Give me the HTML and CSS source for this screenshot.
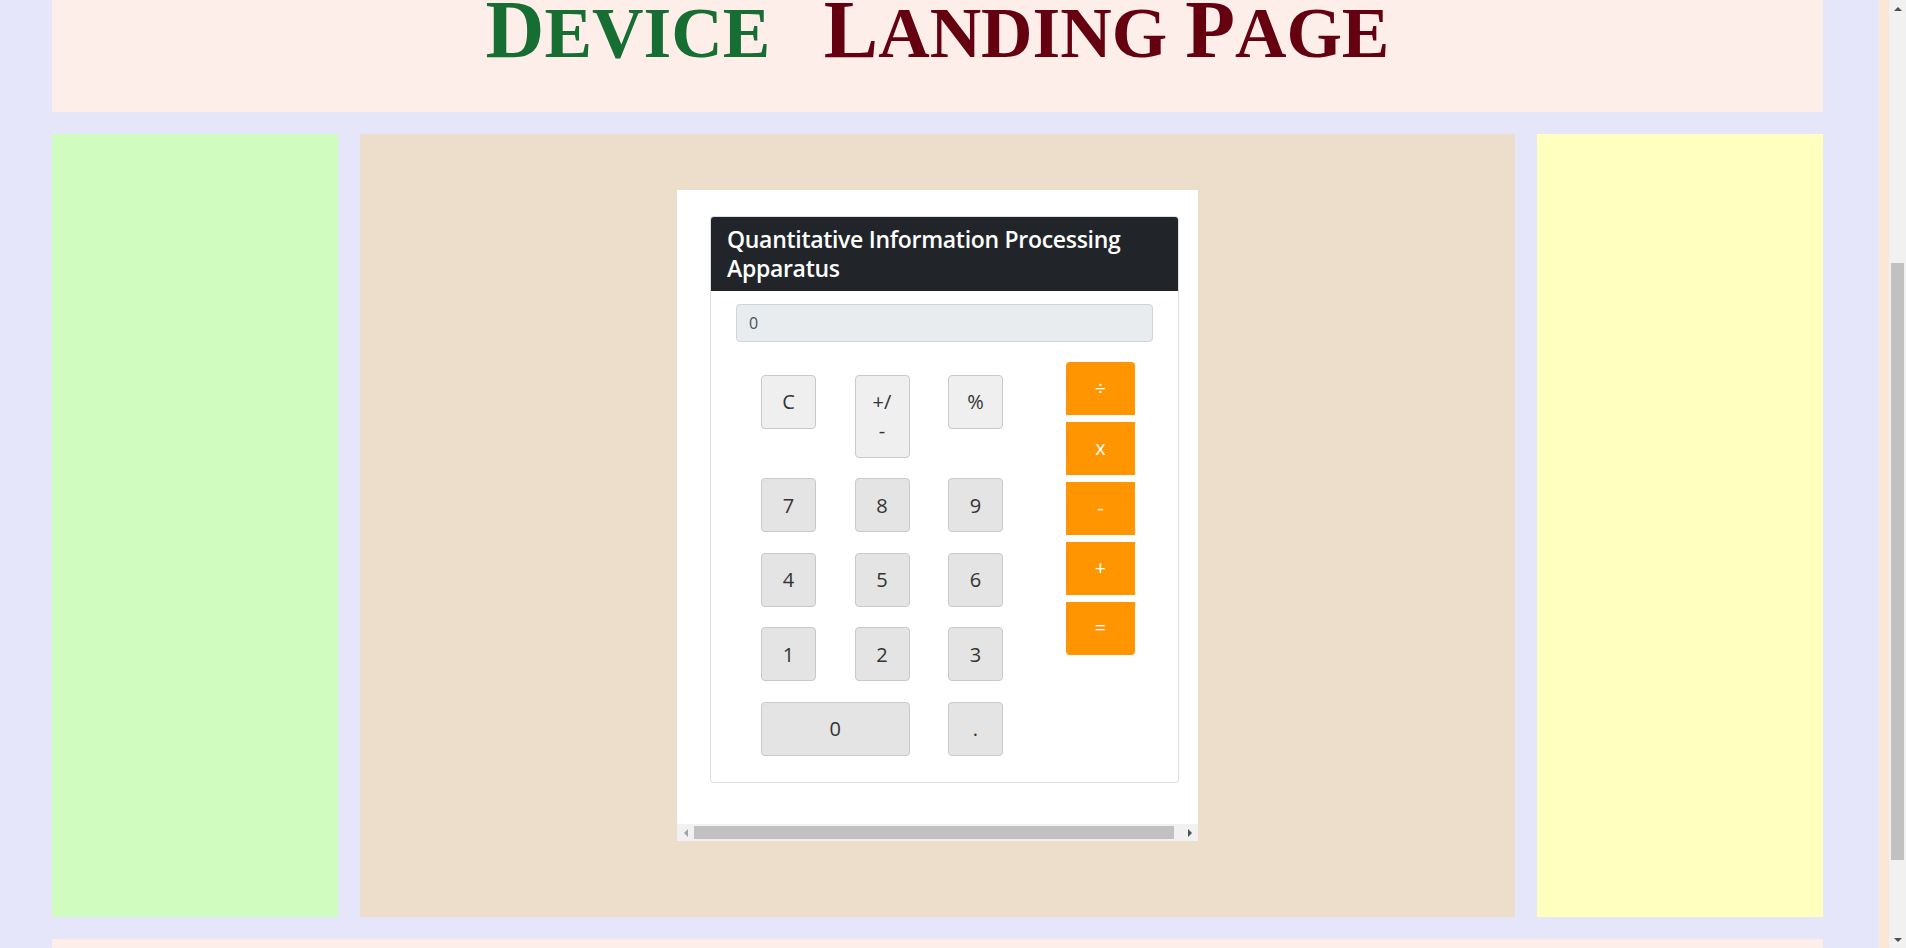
FILE: index.html
```html
<!DOCTYPE html>
<html lang="en">
<head>
<meta charset="utf-8">
<title>Device Landing Page</title>
<link rel="stylesheet" href="styles.css">
</head>
<body>
<div class="page">
  <header class="masthead">
    <h1 class="title"><span class="t-green"><span class="big">D</span>evice</span>&nbsp;&nbsp; <span class="t-red"><span class="big">L</span>anding <span class="big">P</span>age</span></h1>
  </header>
  <main class="columns">
    <aside class="side side-left"></aside>
    <section class="center">
      <div class="frame">
        <div class="frame-view">
          <div class="frame-inner">
            <div class="card">
              <div class="card-header">
                <h4 class="card-title">Quantitative Information Processing Apparatus</h4>
              </div>
              <div class="card-body">
                <div class="display">0</div>
                <div class="keypad">
                  <div class="numbers">
                    <button class="key key-fn">C</button>
                    <button class="key key-fn">+/<br>-</button>
                    <button class="key key-fn">%</button>
                    <button class="key">7</button>
                    <button class="key">8</button>
                    <button class="key">9</button>
                    <button class="key">4</button>
                    <button class="key">5</button>
                    <button class="key">6</button>
                    <button class="key">1</button>
                    <button class="key">2</button>
                    <button class="key">3</button>
                    <button class="key key-zero">0</button>
                    <button class="key">.</button>
                  </div>
                  <div class="ops">
                    <button class="op op-first">÷</button>
                    <button class="op">x</button>
                    <button class="op">-</button>
                    <button class="op">+</button>
                    <button class="op op-last">=</button>
                  </div>
                </div>
              </div>
            </div>
          </div>
        </div>
        <div class="hscroll">
          <div class="sb-btn"><span class="tri tri-left"></span></div>
          <div class="htrack"><div class="hthumb"></div></div>
          <div class="sb-btn"><span class="tri tri-right"></span></div>
        </div>
      </div>
    </section>
    <aside class="side side-right"></aside>
  </main>
  <footer class="footer"></footer>
</div>
<div class="vscroll">
  <div class="sb-btn sb-btn-v"><span class="tri tri-up"></span></div>
  <div class="vtrack"><div class="vthumb"></div></div>
  <div class="sb-btn sb-btn-v"><span class="tri tri-down"></span></div>
</div>
<script src="script.js"></script>
</body>
</html>
```
FILE: styles.css
```css
html {
  background: #fae7d4;
}
body {
  margin: 0 27px 0 0;
  font-family: "Open Sans", "Noto Sans", sans-serif;
}
.page {
  background: #e6e6fa;
  padding: 22px 56px 22px 52px;
  display: flex;
  flex-direction: column;
  gap: 22px;
}
.masthead {
  background: #fdeeea;
  height: 480px;
  box-sizing: border-box;
  display: flex;
  flex-direction: column;
  justify-content: flex-end;
  padding-bottom: 54px;
}
.title {
  margin: 0;
  font-family: "Liberation Serif", "Times New Roman", serif;
  font-weight: bold;
  font-size: 71.3px;
  line-height: 0.7;
  text-transform: uppercase;
  text-align: center;
  white-space: nowrap;
}
.big {
  font-size: 81.5px;
}
.t-green {
  color: #176e32;
}
.t-red {
  color: #650011;
}
.columns {
  display: grid;
  grid-template-columns: 286px 1fr 286px;
  gap: 22px;
}
.side-left {
  background: #d1fcbf;
}
.side-right {
  background: #ffffc0;
}
.center {
  background: #ecdeca;
  padding: 56px 0 76px;
}
.footer {
  background: #fdeeea;
  height: 100px;
}
.frame {
  width: 521px;
  height: 651px;
  margin: 0 auto;
  background: #fff;
  display: flex;
  flex-direction: column;
}
.frame-view {
  flex: 1;
  overflow: hidden;
}
.frame-inner {
  width: 528px;
  box-sizing: border-box;
  padding: 26px 26px 0 33px;
}
.card {
  width: 469px;
  box-sizing: border-box;
  border: 1px solid rgba(0, 0, 0, 0.125);
  border-radius: 4px;
  background: #fff;
}
.card-header {
  background: #212529;
  color: #fff;
  padding: 8px 16px;
  border-radius: 3px 3px 0 0;
}
.card-title {
  margin: 0;
  font-size: 23px;
  line-height: 28.8px;
  font-weight: 600;
  letter-spacing: -0.3px;
}
.card-body {
  padding: 13px 25px 26px;
}
.display {
  height: 38px;
  box-sizing: border-box;
  border: 1px solid #ced4da;
  border-radius: 4px;
  background: #e9ecef;
  color: #495057;
  padding: 6px 12px;
  font-size: 16px;
  line-height: 24px;
}
.keypad {
  display: flex;
  align-items: flex-start;
  margin-top: 20px;
}
.numbers {
  display: grid;
  grid-template-columns: 55px 55px 55px;
  column-gap: 38.5px;
  row-gap: 20.5px;
  align-items: start;
  margin: 13px 0 0 25px;
}
.key {
  font-family: "Open Sans", "Noto Sans", sans-serif;
  font-size: 20px;
  line-height: 29px;
  padding: 11.5px 0;
  margin: 0;
  border: 1px solid #c9c9c9;
  border-radius: 4px;
  background: #e4e4e4;
  color: #333;
  text-align: center;
}
.key-fn {
  background: #efefef;
}
.key-zero {
  grid-column: span 2;
}
.ops {
  display: flex;
  flex-direction: column;
  gap: 7px;
  margin-left: 63px;
  width: 69px;
}
.op {
  height: 53px;
  margin: 0;
  padding: 0;
  border: 0;
  border-radius: 0;
  background: #ff9500;
  color: #fff;
  font-family: "Open Sans", "Noto Sans", sans-serif;
  font-size: 20px;
  line-height: 28px;
  text-align: center;
}
.op-first {
  border-radius: 4px 4px 0 0;
}
.op-last {
  border-radius: 0 0 4px 4px;
}

/* imitation scrollbars */
.hscroll {
  display: flex;
  height: 17px;
  background: #f1f1f1;
}
.sb-btn {
  width: 17px;
  height: 17px;
  flex: none;
  display: flex;
  align-items: center;
  justify-content: center;
}
.htrack {
  flex: 1;
  padding: 2px 7px 2px 0;
  display: flex;
}
.hthumb {
  flex: 1;
  background: #c1c1c1;
}
.vscroll {
  position: fixed;
  top: 0;
  right: 0;
  width: 17px;
  height: 100vh;
  background: #f1f1f1;
  display: flex;
  flex-direction: column;
}
.vtrack {
  flex: 1;
  padding: 246px 2px 0;
}
.vthumb {
  height: 597px;
  background: #c1c1c1;
}
.tri {
  width: 0;
  height: 0;
  display: block;
}
.tri-left {
  border-top: 4px solid transparent;
  border-bottom: 4px solid transparent;
  border-right: 4px solid #a3a3a3;
}
.tri-right {
  border-top: 4px solid transparent;
  border-bottom: 4px solid transparent;
  border-left: 4px solid #505050;
}
.tri-up {
  border-left: 4px solid transparent;
  border-right: 4px solid transparent;
  border-bottom: 4px solid #505050;
}
.tri-down {
  border-left: 4px solid transparent;
  border-right: 4px solid transparent;
  border-top: 4px solid #505050;
}
```
FILE: script.js
```js
window.scrollTo(0, 390);
```
